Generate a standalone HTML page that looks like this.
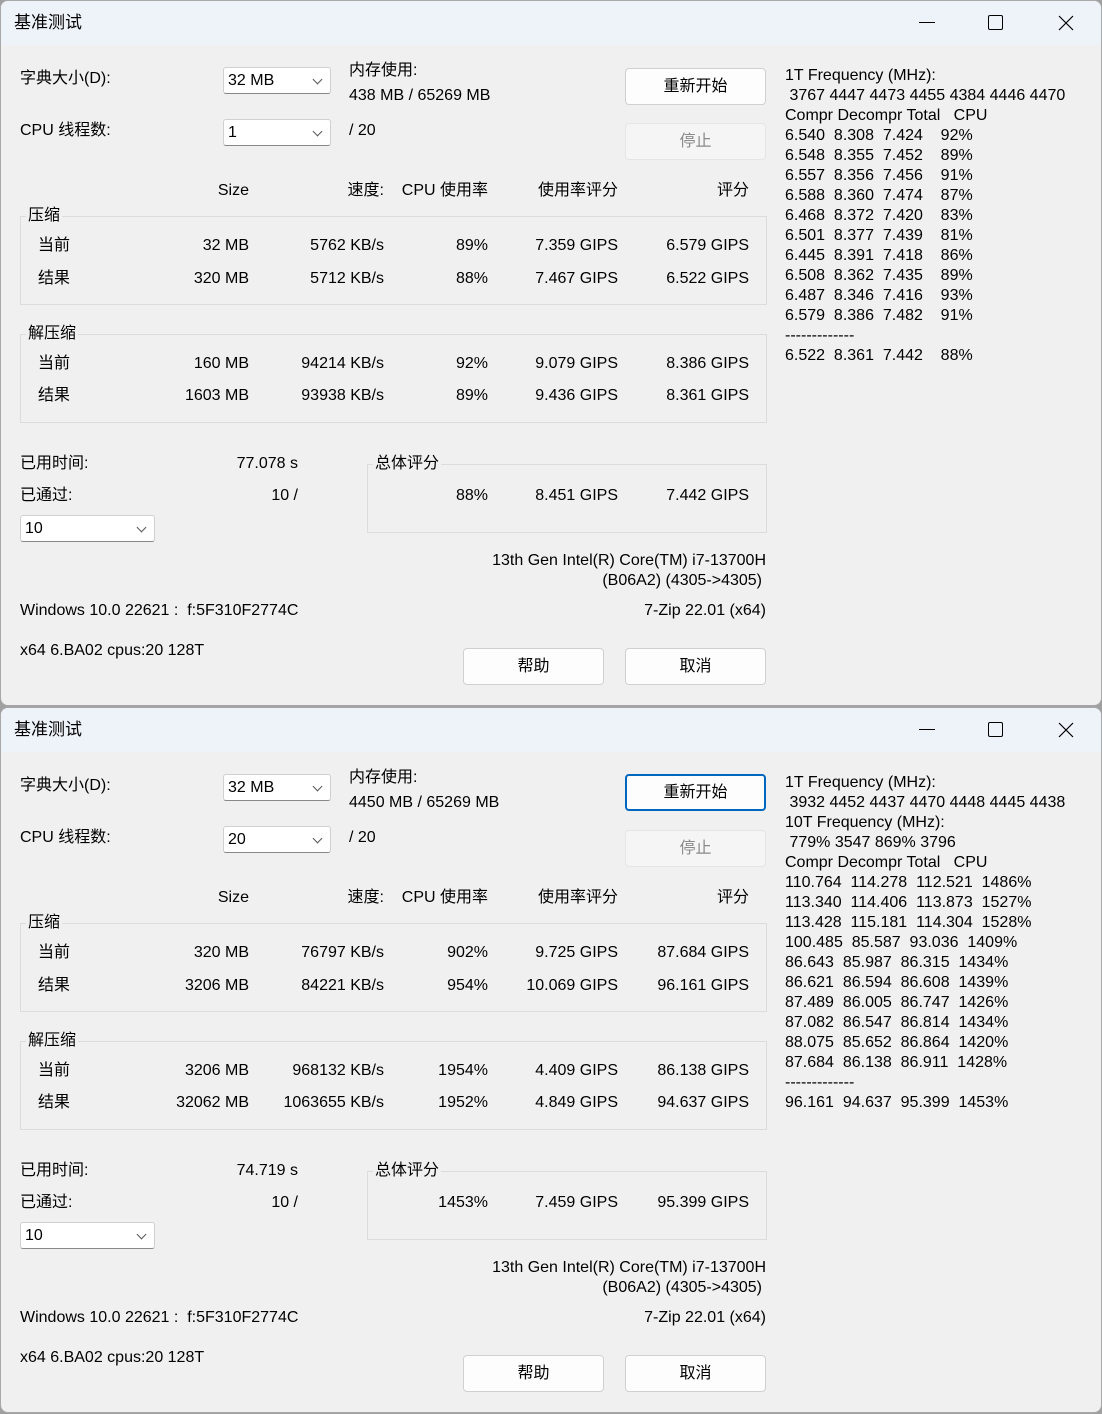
<!DOCTYPE html>
<html><head><meta charset="utf-8"><style>
*{margin:0;padding:0;box-sizing:border-box}
body{width:1102px;height:1414px;background:#a0a0a0;position:relative;overflow:hidden;font-family:"Liberation Sans","Noto Sans CJK SC",sans-serif;font-size:16px;color:#000}
.w{position:absolute;left:0;width:1102px;background:#f0f0f0;border:1px solid #a8a8a8;border-radius:8px;overflow:hidden}
.tb{position:absolute;left:0;top:0;width:100%;height:44px;background:#eef2f9}
.t{position:absolute;line-height:20px;white-space:pre}
.r{position:absolute;line-height:20px;white-space:pre;text-align:right}
.cb{position:absolute;background:#fff;border:1px solid #d0d0d0;border-bottom-color:#888;border-radius:3px;height:27px;padding-left:4px;line-height:25px}
.cb:after{content:"";position:absolute;right:9px;top:8px;width:6px;height:6px;border-right:1px solid #555;border-bottom:1px solid #555;transform:rotate(45deg)}
.bt{position:absolute;width:141px;height:37px;background:#fdfdfd;border:1px solid #d0d0d0;border-radius:4px;text-align:center;line-height:35px}
.dis{background:#f5f5f5;border-color:#e5e5e5;color:#8a8a8a}
.foc{border:2px solid #0067c0;line-height:33px}
.g{position:absolute;border:1px solid #dcdcdc}
.gl{position:absolute;background:#f0f0f0;padding:0 2px;line-height:20px}
.p{position:absolute;line-height:20px}
.p div{white-space:pre}
</style></head><body>

<!-- WINDOW 1 -->
<div class="w" style="top:0;height:706px">
<div class="tb"></div>
<div class="t" style="left:13px;top:12px;font-size:17px">基准测试</div>
<div style="position:absolute;left:918px;top:21px;width:16px;border-top:1px solid #000"></div>
<div style="position:absolute;left:987px;top:14px;width:15px;height:15px;border:1px solid #000;border-radius:2px"></div>
<svg style="position:absolute;left:1057px;top:14px" width="16" height="16"><path d="M1 1L15 15M15 1L1 15" stroke="#000" stroke-width="1.2"/></svg>

<div class="t" style="left:19px;top:68px">字典大小(D):</div>
<div class="cb" style="left:222px;top:66px;width:108px">32 MB</div>
<div class="t" style="left:348px;top:60px">内存使用:</div>
<div class="t" style="left:348px;top:85px">438 MB / 65269 MB</div>
<div class="bt" style="left:624px;top:67px">重新开始</div>
<div class="t" style="left:19px;top:120px">CPU 线程数:</div>
<div class="cb" style="left:222px;top:118px;width:108px">1</div>
<div class="t" style="left:348px;top:120px">/ 20</div>
<div class="bt dis" style="left:624px;top:122px">停止</div>

<div class="r" style="right:852px;top:180px">Size</div>
<div class="r" style="right:717px;top:180px">速度:</div>
<div class="r" style="right:613px;top:180px">CPU 使用率</div>
<div class="r" style="right:483px;top:180px">使用率评分</div>
<div class="r" style="right:352px;top:180px">评分</div>

<div class="g" style="left:19px;top:215px;width:747px;height:89px"></div>
<div class="gl" style="left:25px;top:205px">压缩</div>
<div class="t" style="left:37px;top:235px">当前</div>
<div class="r" style="right:852px;top:235px">32 MB</div>
<div class="r" style="right:717px;top:235px">5762 KB/s</div>
<div class="r" style="right:613px;top:235px">89%</div>
<div class="r" style="right:483px;top:235px">7.359 GIPS</div>
<div class="r" style="right:352px;top:235px">6.579 GIPS</div>
<div class="t" style="left:37px;top:268px">结果</div>
<div class="r" style="right:852px;top:268px">320 MB</div>
<div class="r" style="right:717px;top:268px">5712 KB/s</div>
<div class="r" style="right:613px;top:268px">88%</div>
<div class="r" style="right:483px;top:268px">7.467 GIPS</div>
<div class="r" style="right:352px;top:268px">6.522 GIPS</div>

<div class="g" style="left:19px;top:333px;width:747px;height:89px"></div>
<div class="gl" style="left:25px;top:323px">解压缩</div>
<div class="t" style="left:37px;top:353px">当前</div>
<div class="r" style="right:852px;top:353px">160 MB</div>
<div class="r" style="right:717px;top:353px">94214 KB/s</div>
<div class="r" style="right:613px;top:353px">92%</div>
<div class="r" style="right:483px;top:353px">9.079 GIPS</div>
<div class="r" style="right:352px;top:353px">8.386 GIPS</div>
<div class="t" style="left:37px;top:385px">结果</div>
<div class="r" style="right:852px;top:385px">1603 MB</div>
<div class="r" style="right:717px;top:385px">93938 KB/s</div>
<div class="r" style="right:613px;top:385px">89%</div>
<div class="r" style="right:483px;top:385px">9.436 GIPS</div>
<div class="r" style="right:352px;top:385px">8.361 GIPS</div>

<div class="t" style="left:19px;top:453px">已用时间:</div>
<div class="r" style="right:803px;top:453px">77.078 s</div>
<div class="t" style="left:19px;top:485px">已通过:</div>
<div class="r" style="right:803px;top:485px">10 /</div>
<div class="cb" style="left:19px;top:514px;width:135px">10</div>

<div class="g" style="left:366px;top:463px;width:400px;height:69px"></div>
<div class="gl" style="left:372px;top:453px">总体评分</div>
<div class="r" style="right:613px;top:485px">88%</div>
<div class="r" style="right:483px;top:485px">8.451 GIPS</div>
<div class="r" style="right:352px;top:485px">7.442 GIPS</div>

<div class="r" style="right:335px;top:550px">13th Gen Intel(R) Core(TM) i7-13700H</div>
<div class="r" style="right:339px;top:570px">(B06A2) (4305-&gt;4305)</div>
<div class="t" style="left:19px;top:600px">Windows 10.0 22621 :  f:5F310F2774C</div>
<div class="r" style="right:335px;top:600px">7-Zip 22.01 (x64)</div>
<div class="t" style="left:19px;top:640px">x64 6.BA02 cpus:20 128T</div>
<div class="bt" style="left:462px;top:647px">帮助</div>
<div class="bt" style="left:624px;top:647px">取消</div>

<div class="p" style="left:784px;top:65px">
<div>1T Frequency (MHz):</div>
<div> 3767 4447 4473 4455 4384 4446 4470</div>
<div>Compr Decompr Total   CPU</div>
<div>6.540  8.308  7.424    92%</div>
<div>6.548  8.355  7.452    89%</div>
<div>6.557  8.356  7.456    91%</div>
<div>6.588  8.360  7.474    87%</div>
<div>6.468  8.372  7.420    83%</div>
<div>6.501  8.377  7.439    81%</div>
<div>6.445  8.391  7.418    86%</div>
<div>6.508  8.362  7.435    89%</div>
<div>6.487  8.346  7.416    93%</div>
<div>6.579  8.386  7.482    91%</div>
<div>-------------</div>
<div>6.522  8.361  7.442    88%</div>
</div>
</div>

<!-- WINDOW 2 -->
<div class="w" style="top:707px;height:706px">
<div class="tb"></div>
<div class="t" style="left:13px;top:12px;font-size:17px">基准测试</div>
<div style="position:absolute;left:918px;top:21px;width:16px;border-top:1px solid #000"></div>
<div style="position:absolute;left:987px;top:14px;width:15px;height:15px;border:1px solid #000;border-radius:2px"></div>
<svg style="position:absolute;left:1057px;top:14px" width="16" height="16"><path d="M1 1L15 15M15 1L1 15" stroke="#000" stroke-width="1.2"/></svg>

<div class="t" style="left:19px;top:68px">字典大小(D):</div>
<div class="cb" style="left:222px;top:66px;width:108px">32 MB</div>
<div class="t" style="left:348px;top:60px">内存使用:</div>
<div class="t" style="left:348px;top:85px">4450 MB / 65269 MB</div>
<div class="bt foc" style="left:624px;top:66px">重新开始</div>
<div class="t" style="left:19px;top:120px">CPU 线程数:</div>
<div class="cb" style="left:222px;top:118px;width:108px">20</div>
<div class="t" style="left:348px;top:120px">/ 20</div>
<div class="bt dis" style="left:624px;top:122px">停止</div>

<div class="r" style="right:852px;top:180px">Size</div>
<div class="r" style="right:717px;top:180px">速度:</div>
<div class="r" style="right:613px;top:180px">CPU 使用率</div>
<div class="r" style="right:483px;top:180px">使用率评分</div>
<div class="r" style="right:352px;top:180px">评分</div>

<div class="g" style="left:19px;top:215px;width:747px;height:89px"></div>
<div class="gl" style="left:25px;top:205px">压缩</div>
<div class="t" style="left:37px;top:235px">当前</div>
<div class="r" style="right:852px;top:235px">320 MB</div>
<div class="r" style="right:717px;top:235px">76797 KB/s</div>
<div class="r" style="right:613px;top:235px">902%</div>
<div class="r" style="right:483px;top:235px">9.725 GIPS</div>
<div class="r" style="right:352px;top:235px">87.684 GIPS</div>
<div class="t" style="left:37px;top:268px">结果</div>
<div class="r" style="right:852px;top:268px">3206 MB</div>
<div class="r" style="right:717px;top:268px">84221 KB/s</div>
<div class="r" style="right:613px;top:268px">954%</div>
<div class="r" style="right:483px;top:268px">10.069 GIPS</div>
<div class="r" style="right:352px;top:268px">96.161 GIPS</div>

<div class="g" style="left:19px;top:333px;width:747px;height:89px"></div>
<div class="gl" style="left:25px;top:323px">解压缩</div>
<div class="t" style="left:37px;top:353px">当前</div>
<div class="r" style="right:852px;top:353px">3206 MB</div>
<div class="r" style="right:717px;top:353px">968132 KB/s</div>
<div class="r" style="right:613px;top:353px">1954%</div>
<div class="r" style="right:483px;top:353px">4.409 GIPS</div>
<div class="r" style="right:352px;top:353px">86.138 GIPS</div>
<div class="t" style="left:37px;top:385px">结果</div>
<div class="r" style="right:852px;top:385px">32062 MB</div>
<div class="r" style="right:717px;top:385px">1063655 KB/s</div>
<div class="r" style="right:613px;top:385px">1952%</div>
<div class="r" style="right:483px;top:385px">4.849 GIPS</div>
<div class="r" style="right:352px;top:385px">94.637 GIPS</div>

<div class="t" style="left:19px;top:453px">已用时间:</div>
<div class="r" style="right:803px;top:453px">74.719 s</div>
<div class="t" style="left:19px;top:485px">已通过:</div>
<div class="r" style="right:803px;top:485px">10 /</div>
<div class="cb" style="left:19px;top:514px;width:135px">10</div>

<div class="g" style="left:366px;top:463px;width:400px;height:69px"></div>
<div class="gl" style="left:372px;top:453px">总体评分</div>
<div class="r" style="right:613px;top:485px">1453%</div>
<div class="r" style="right:483px;top:485px">7.459 GIPS</div>
<div class="r" style="right:352px;top:485px">95.399 GIPS</div>

<div class="r" style="right:335px;top:550px">13th Gen Intel(R) Core(TM) i7-13700H</div>
<div class="r" style="right:339px;top:570px">(B06A2) (4305-&gt;4305)</div>
<div class="t" style="left:19px;top:600px">Windows 10.0 22621 :  f:5F310F2774C</div>
<div class="r" style="right:335px;top:600px">7-Zip 22.01 (x64)</div>
<div class="t" style="left:19px;top:640px">x64 6.BA02 cpus:20 128T</div>
<div class="bt" style="left:462px;top:647px">帮助</div>
<div class="bt" style="left:624px;top:647px">取消</div>

<div class="p" style="left:784px;top:65px">
<div>1T Frequency (MHz):</div>
<div> 3932 4452 4437 4470 4448 4445 4438</div>
<div>10T Frequency (MHz):</div>
<div> 779% 3547 869% 3796</div>
<div>Compr Decompr Total   CPU</div>
<div>110.764  114.278  112.521  1486%</div>
<div>113.340  114.406  113.873  1527%</div>
<div>113.428  115.181  114.304  1528%</div>
<div>100.485  85.587  93.036  1409%</div>
<div>86.643  85.987  86.315  1434%</div>
<div>86.621  86.594  86.608  1439%</div>
<div>87.489  86.005  86.747  1426%</div>
<div>87.082  86.547  86.814  1434%</div>
<div>88.075  85.652  86.864  1420%</div>
<div>87.684  86.138  86.911  1428%</div>
<div>-------------</div>
<div>96.161  94.637  95.399  1453%</div>
</div>
</div>
</body></html>
